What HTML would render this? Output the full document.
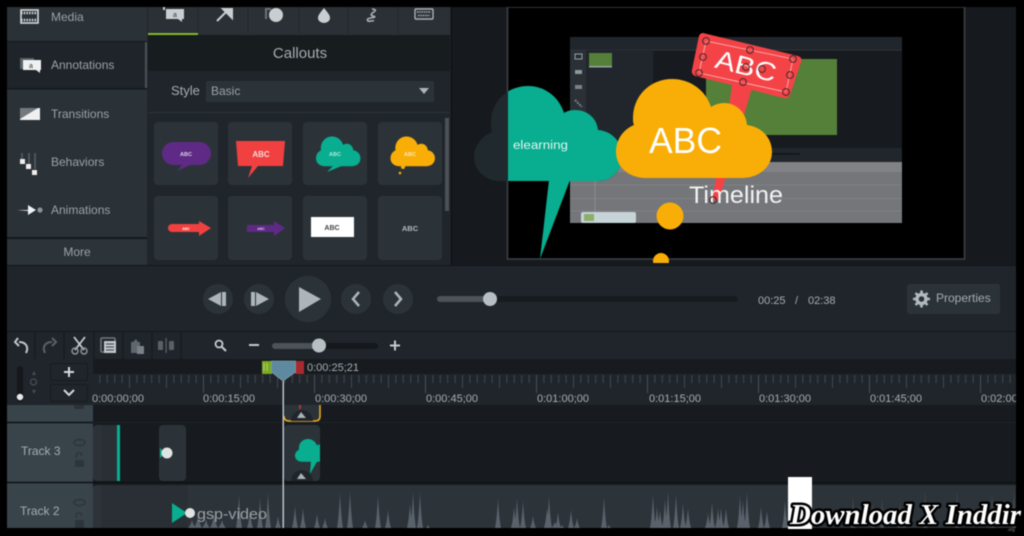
<!DOCTYPE html>
<html lang="en">
<head>
<meta charset="utf-8">
<title>Camtasia callouts</title>
<style>
html,body{margin:0;padding:0;background:#000;width:1024px;height:536px;overflow:hidden}
svg{display:block;filter:blur(.45px)}
text{font-family:"Liberation Sans",sans-serif}
</style>
</head>
<body>
<svg width="1024" height="536" viewBox="0 0 1024 536" xmlns="http://www.w3.org/2000/svg">
<defs>
<pattern id="t1" x="92" y="374" width="7.4" height="20" patternUnits="userSpaceOnUse"><rect x="0" y="1" width="1" height="8" fill="#3f474d"/></pattern>
<pattern id="t2" x="92" y="374" width="37" height="20" patternUnits="userSpaceOnUse"><rect x="0" y="1" width="1" height="13" fill="#3f474d"/></pattern>
<pattern id="t3" x="92" y="374" width="111" height="20" patternUnits="userSpaceOnUse"><rect x="0" y="1" width="1" height="18" fill="#474f55"/></pattern>
<clipPath id="canvasClip"><rect x="508" y="7" width="457" height="252"/></clipPath>
<clipPath id="dotClip"><rect x="640" y="240" width="50" height="23"/></clipPath>
<clipPath id="clipThumb"><rect x="284" y="425" width="36" height="56"/></clipPath>
</defs>

<rect width="1024" height="536" fill="#000"/>

<!-- sidebar -->
<rect x="7" y="7" width="140" height="259" fill="#2a3137"/>
<rect x="7" y="41" width="140" height="1.5" fill="#14181b"/>
<rect x="7" y="42" width="140" height="46" fill="#1e2429"/>
<rect x="145" y="42" width="2" height="46" fill="#4a5258"/>
<rect x="7" y="88" width="140" height="1.5" fill="#14181b"/>
<rect x="7" y="237" width="140" height="2" fill="#14181b"/>
<rect x="7" y="239" width="140" height="26" fill="#2c3339"/>
<g font-size="12" fill="#9aa3a8">
<text x="51" y="21">Media</text>
<text x="51" y="69">Annotations</text>
<text x="51" y="118">Transitions</text>
<text x="51" y="166">Behaviors</text>
<text x="51" y="214">Animations</text>
</g>
<text x="77" y="256" font-size="12" fill="#9aa3a8" text-anchor="middle">More</text>
<!-- media icon -->
<rect x="21" y="10" width="17" height="13" fill="none" stroke="#d5d9db" stroke-width="1.6"/>
<path d="M21 13H38M21 20H38" stroke="#d5d9db" stroke-width="2.4" stroke-dasharray="1.5 1.2"/>
<!-- annotation icon -->
<path d="M20 58h14v3H23v8h-3z" fill="#596167"/>
<path d="M23 60H41V70H40V73L36 70H23Z" fill="#eef0f1"/>
<text x="31" y="68" font-size="7" fill="#333" text-anchor="middle">a</text>
<!-- transitions -->
<path d="M20 108H40V120H20Z" fill="#eef0f1"/><path d="M20 120V119L38 108H20Z" fill="#73797d"/>
<!-- behaviors -->
<path d="M22 153v7M29 153v12M35 153v16" stroke="#4e565b" stroke-width="2"/>
<rect x="20" y="159" width="5" height="5" fill="#eee"/><rect x="26" y="164" width="5" height="5" fill="#eee"/><rect x="32" y="170" width="5" height="5" fill="#eee"/>
<!-- animations -->
<path d="M17 210H28V205L36 210L28 215V211Z" fill="#f0f2f3"/><circle cx="40" cy="210" r="2.6" fill="#8c9397"/>

<!-- panel -->
<rect x="147" y="7" width="305" height="259" fill="#20252b"/>
<rect x="148" y="7" width="302" height="28" fill="#2a3036"/>
<path d="M198 7V34M248 7V34M299 7V34M348 7V34M398 7V34" stroke="#22272c"/>
<rect x="148" y="33" width="50" height="2" fill="#84b82a"/>
<rect x="148" y="35" width="302" height="36" fill="#171c1f"/>
<text x="300" y="58" font-size="15" fill="#a4adb2" text-anchor="middle">Callouts</text>
<text x="171" y="95" font-size="13" fill="#a4adb2">Style</text>
<rect x="206" y="81" width="228" height="21" rx="2" fill="#2c3338"/>
<text x="211" y="95" font-size="12" fill="#9aa3a8">Basic</text>
<path d="M419 88H429L424 94Z" fill="#aeb5b9"/>
<rect x="148" y="112" width="302" height="1" fill="#2b3238"/>
<rect x="445" y="118" width="4" height="93" fill="#4a5258"/>
<!-- tab icons -->
<path d="M163 7h2v3h-2zM166 9H184V19H182V22L178 19H166Z" fill="#c9ced1"/>
<text x="175" y="17" font-size="7" fill="#333" text-anchor="middle">a</text>
<path d="M217 21L228 10M223 9H232V18Z" stroke="#c9ced1" stroke-width="2" fill="#c9ced1"/>
<path d="M265 8h6v2h-4v9h-2z" fill="#6b7277"/><circle cx="276" cy="15" r="7" fill="#c9ced1"/>
<path d="M324 8C320 13 318 15 318 18A6 5 0 0 0 330 18C330 15 328 13 324 8Z" fill="#c9ced1"/>
<path d="M372 9C382 10 366 14 373 16C380 18 364 17 368 21C370 22 372 20 374 21" fill="none" stroke="#aab1b5" stroke-width="1.6"/>
<rect x="415" y="9" width="18" height="10" rx="1" fill="none" stroke="#aab1b5" stroke-width="1.4"/>
<path d="M417 12H431M418 15.500H430" stroke="#aab1b5" stroke-width="1.600" stroke-dasharray="1.500 .8"/>

<!-- tiles -->
<g fill="#2c3338">
<rect x="154" y="122" width="64" height="63" rx="4"/><rect x="228" y="122" width="64" height="63" rx="4"/><rect x="303" y="122" width="64" height="63" rx="4"/><rect x="378" y="122" width="64" height="63" rx="4"/>
<rect x="154" y="196" width="64" height="64" rx="4"/><rect x="228" y="196" width="64" height="64" rx="4"/><rect x="303" y="196" width="64" height="64" rx="4"/><rect x="378" y="196" width="64" height="64" rx="4"/>
</g>
<rect x="162" y="142" width="49" height="23" rx="11.500" fill="#5f2a86"/><path d="M183 164L177 171L192 164Z" fill="#5f2a86"/>
<text x="186" y="156" font-size="5.500" font-weight="bold" fill="#dcd3e3" text-anchor="middle">ABC</text>
<path d="M236 141L285 141L283 166L258 166L248 178L252 166L238 166Z" fill="#f04040"/>
<text x="261" y="157" font-size="8" font-weight="bold" fill="#f6d9d9" text-anchor="middle">ABC</text>
<g transform="translate(316,136.500) scale(.285,.3) translate(-616,-79)"><path d="M646 178H742C760 178 772 166 772 152C772 138 762 127 747 125C746 112 736 103 724 103C719 103 714 105 711 107C706 91 691 79 672 79C650 79 633 96 633 118C633 121 633 123 634 125C624 129 616 139 616 152C616 167 629 178 646 178Z" fill="#08ae8f"/></g>
<path d="M334 165L327 172L344 165Z" fill="#08ae8f"/>
<text x="335" y="156" font-size="5.500" font-weight="bold" fill="#b9e4db" text-anchor="middle">ABC</text>
<g transform="translate(390.500,136.500) scale(.285,.3) translate(-616,-79)"><path d="M646 178H742C760 178 772 166 772 152C772 138 762 127 747 125C746 112 736 103 724 103C719 103 714 105 711 107C706 91 691 79 672 79C650 79 633 96 633 118C633 121 633 123 634 125C624 129 616 139 616 152C616 167 629 178 646 178Z" fill="#f8ae06"/></g>
<circle cx="403" cy="167" r="2" fill="#f8ae06"/><circle cx="400" cy="173" r="1.300" fill="#f8ae06"/>
<text x="410" y="156" font-size="5.500" font-weight="bold" fill="#fbe6b8" text-anchor="middle">ABC</text>
<path d="M172 224H199V221L211 228L199 236V232H172A4 4 0 0 1 172 224Z" fill="#f04040"/>
<text x="186" y="230" font-size="3.500" font-weight="bold" fill="#fff" text-anchor="middle">ABC</text>
<path d="M247 225H274V221L285 228L274 236V232H247Z" fill="#5f2a86"/>
<text x="261" y="230" font-size="3.500" font-weight="bold" fill="#d7c6e3" text-anchor="middle">ABC</text>
<rect x="311" y="217" width="43" height="20" fill="#fff"/>
<text x="332" y="230" font-size="7" font-weight="bold" fill="#444" text-anchor="middle">ABC</text>
<text x="410" y="231" font-size="7.500" font-weight="bold" fill="#b5bbbf" text-anchor="middle">ABC</text>

<!-- canvas area -->
<rect x="452" y="7" width="564" height="258" fill="#161a1e"/>
<rect x="451" y="7" width="1" height="258" fill="#0b0d0f"/>
<rect x="507.500" y="7" width="457" height="252" fill="#000" stroke="#3d4247" stroke-width="1.500"/>
<g clip-path="url(#canvasClip)">
<!-- inner screenshot -->
<rect x="570" y="37" width="332" height="186" fill="#171b1f"/>
<rect x="570" y="37" width="332" height="13" fill="#20262c"/>
<rect x="570" y="49.500" width="332" height="1" fill="#2e353b"/>
<rect x="570" y="50" width="16" height="98" fill="#2a3036"/>
<rect x="586" y="50" width="67" height="98" fill="#20262c"/>
<rect x="589" y="53" width="23" height="13" fill="#54803a"/>
<rect x="589" y="66" width="23" height="1.500" fill="#9ba3a6"/>
<rect x="575" y="54" width="7" height="5" fill="none" stroke="#9aa1a4"/>
<rect x="575" y="70" width="7" height="4" fill="#8f979b"/>
<rect x="575" y="85" width="7" height="4" fill="#7a8286"/>
<path d="M575 100L582 107" stroke="#7a8286" stroke-width="2" stroke-dasharray="2 1"/>
<rect x="706" y="59" width="131" height="76" fill="#54803a"/>
<rect x="570" y="148" width="332" height="14" fill="#20262c"/>
<rect x="760" y="153" width="40" height="2" fill="#14181b"/>
<rect x="570" y="162" width="332" height="61" fill="#747679"/>
<rect x="570" y="162" width="332" height="10" fill="#808285"/>
<path d="M570 185H902M570 198.500H902M570 211H902" stroke="#7f8184"/>
<path d="M595 172V223" stroke="#8a8d8f"/>
<rect x="581" y="212" width="55" height="11" rx="2" fill="#c6d3d7"/>
<rect x="584" y="214" width="10" height="7" fill="#8cae6c"/>
</g>
<!-- teal cloud ghost + cloud -->
<path d="M500 181H598C612 181 622 170 622 156C622 142 612 131 598 130C597 118 587 110 575 110C571 110 567 111 564 113C559 97 545 86 528 86C507 86 491 102 491 122C491 126 491 130 492 132C482 136 474 146 474 157C474 170 485 181 500 181Z" fill="#20292e"/>
<g clip-path="url(#canvasClip)">
<path d="M500 181H598C612 181 622 170 622 156C622 142 612 131 598 130C597 118 587 110 575 110C571 110 567 111 564 113C559 97 545 86 528 86C507 86 491 102 491 122C491 126 491 130 492 132C482 136 474 146 474 157C474 170 485 181 500 181Z" fill="#08ae8f"/>
<path d="M549 180L570 180L540 259Z" fill="#08ae8f"/>
</g>
<text x="513" y="149" font-size="11.500" fill="#e4f5f1" textLength="55" lengthAdjust="spacingAndGlyphs">elearning</text>
<!-- red sign -->
<path d="M732 85L752 88L719 200L716 200Z" fill="#f44347"/>
<path d="M703 33L798 56Q803 58 801 62L790 95Q788 99 784 98L695 76Q691 74 692 70L699 36Q700 33 703 33Z" fill="#f44347"/>
<path d="M706 41L793 59L786 92L699 73Z" fill="none" stroke="#f9c0c0" stroke-width=".8"/>
<text x="746" y="75" font-size="26" fill="#fff" text-anchor="middle" transform="rotate(14 746 66)" textLength="62" lengthAdjust="spacingAndGlyphs">ABC</text>
<g fill="#e8484b" fill-opacity=".6" stroke="#3a2326" stroke-width=".9">
<circle cx="706" cy="41" r="3.400"/><circle cx="750" cy="50" r="3.400"/><circle cx="793" cy="59" r="3.400"/><circle cx="703" cy="57" r="3.400"/><circle cx="790" cy="75" r="3.400"/><circle cx="699" cy="73" r="3.400"/><circle cx="743" cy="82" r="3.400"/><circle cx="786" cy="92" r="3.400"/><circle cx="746" cy="67" r="3.400"/><circle cx="762" cy="69" r="3.400"/>
</g>
<!-- amber cloud -->
<path d="M646 178H742C760 178 772 166 772 152C772 138 762 127 747 125C746 112 736 103 724 103C719 103 714 105 711 107C706 91 691 79 672 79C650 79 633 96 633 118C633 121 633 123 634 125C624 129 616 139 616 152C616 167 629 178 646 178Z" fill="#f8ae06"/>
<text x="649" y="153" font-size="36" fill="#fff" textLength="73" lengthAdjust="spacingAndGlyphs">ABC</text>
<path d="M716 178H721L716 200H712Z" fill="#f44347"/>
<text x="689" y="203" font-size="24" fill="#f2f3f3" textLength="94" lengthAdjust="spacingAndGlyphs">Timeline</text>
<circle cx="713" cy="200" r="3.400" fill="none" stroke="#3a2326"/>
<ellipse cx="670" cy="216" rx="13.500" ry="13.500" fill="#f8ae06"/>
<g clip-path="url(#dotClip)"><circle cx="661" cy="261" r="8" fill="#f8ae06"/></g>

<!-- player -->
<rect x="7" y="265" width="1009" height="1.500" fill="#12161a"/>
<rect x="7" y="266" width="1009" height="65" fill="#20252b"/>
<g fill="#2c3338">
<circle cx="218" cy="299" r="15"/><circle cx="259" cy="299" r="15"/><circle cx="308" cy="299" r="23"/><circle cx="356" cy="299" r="15"/><circle cx="398" cy="299" r="15"/>
</g>
<path d="M208 299L221 292V306ZM222 292H226V306H222Z" fill="#aeb5b9"/>
<path d="M251 292H255V306H251ZM256 292L269 299L256 306Z" fill="#aeb5b9"/>
<path d="M299 287L321 299L299 312Z" fill="#aeb5b9"/>
<path d="M359 292L353 299L359 306" fill="none" stroke="#aeb5b9" stroke-width="2.500"/>
<path d="M395 292L401 299L395 306" fill="none" stroke="#aeb5b9" stroke-width="2.500"/>
<rect x="437" y="296" width="301" height="6" rx="3" fill="#171b1f"/>
<rect x="437" y="296" width="53" height="6" rx="3" fill="#4b5258"/>
<circle cx="490" cy="299" r="7" fill="#b8bfc3"/>
<text x="758" y="304" font-size="11" fill="#a4adb2">00:25</text>
<text x="795" y="304" font-size="11" fill="#a4adb2">/</text>
<text x="808" y="304" font-size="11" fill="#a4adb2">02:38</text>
<rect x="907" y="284" width="93" height="30" rx="3" fill="#2c3338"/>
<path d="M921.500 290.500V307.500M913 299H930M915.500 293L927.500 305M927.500 293L915.500 305" stroke="#b3babd" stroke-width="2.600"/>
<circle cx="921.500" cy="299" r="6.200" fill="#b3babd"/>
<circle cx="921.500" cy="299" r="2.800" fill="#2c3338"/>
<text x="936" y="302" font-size="12" fill="#a4adb2">Properties</text>

<!-- toolbar -->
<rect x="7" y="331" width="1009" height="1" fill="#14181b"/>
<rect x="7" y="332" width="1009" height="27" fill="#20252b"/>
<path d="M35 332V359M64 332V359M94 332V359M123 332V359M152 332V359M181 332V359" stroke="#14181b"/>
<path d="M26 353C29 347 26 342 19 342M18 338L15 342L19 346" fill="none" stroke="#c0c6c9" stroke-width="2"/>
<path d="M45 353C42 347 45 342 52 342M52 338L56 342L52 346" fill="none" stroke="#596167" stroke-width="2"/>
<path d="M74 337L84 350M85 337L75 350" stroke="#c5cacd" stroke-width="1.800"/><circle cx="75" cy="351" r="3" fill="none" stroke="#8f979b" stroke-width="1.400"/><circle cx="84" cy="351" r="3" fill="none" stroke="#8f979b" stroke-width="1.400"/>
<rect x="101" y="338" width="14" height="14" rx="1" fill="none" stroke="#71797e" stroke-width="1.500"/>
<rect x="104" y="341" width="12" height="12" fill="#c0c6c9"/><path d="M106 344H114M106 347H114M106 350H114" stroke="#3b4247"/>
<path d="M131 342H140V353H131Z" fill="#5f676c"/><path d="M133 342L136 339L138 342Z" fill="#5f676c"/><rect x="137" y="346" width="7" height="8" fill="#7a8287"/>
<rect x="158" y="341" width="5" height="9" rx="1" fill="#596167"/><rect x="169" y="341" width="5" height="9" rx="1" fill="#596167"/><rect x="165.500" y="338" width="1.200" height="15" fill="#596167"/>
<circle cx="219" cy="344" r="3.500" fill="none" stroke="#c5cacd" stroke-width="1.800"/><path d="M222 347L226 351" stroke="#c5cacd" stroke-width="2"/>
<rect x="249" y="344" width="10" height="2" fill="#c5cacd"/>
<rect x="272" y="343" width="106" height="6" rx="3" fill="#14181b"/>
<rect x="272" y="343" width="47" height="6" rx="3" fill="#4b5258"/>
<circle cx="319" cy="345.500" r="7" fill="#b8bfc3"/>
<path d="M390 345.500H400M395 340.500V350.500" stroke="#c5cacd" stroke-width="2"/>

<!-- timeline head -->
<rect x="7" y="359" width="1009" height="46" fill="#20252b"/>
<rect x="93" y="359" width="923" height="15" fill="#171b1f"/>
<rect x="93" y="374" width="923" height="20" fill="url(#t1)"/>
<rect x="93" y="374" width="923" height="20" fill="url(#t2)"/>
<rect x="93" y="374" width="923" height="20" fill="url(#t3)"/>
<rect x="17" y="366" width="6" height="36" rx="3" fill="#14181b"/>
<circle cx="20" cy="397" r="3.200" fill="#e6e8e9"/>
<path d="M34 371L32 375H36ZM34 394L32 390H36Z" fill="#454d52"/>
<circle cx="33.500" cy="382" r="3" fill="none" stroke="#454d52" stroke-width="1.300"/>
<rect x="50.500" y="363.500" width="37" height="17" rx="2" fill="#20252b" stroke="#171b1f"/>
<rect x="50.500" y="384.500" width="37" height="17" rx="2" fill="#20252b" stroke="#171b1f"/>
<path d="M64 372H74M69 367V377" stroke="#d5d9db" stroke-width="2"/>
<path d="M64 390L69 395L74 390" fill="none" stroke="#d5d9db" stroke-width="2"/>
<g font-size="11" fill="#a4adb2">
<text x="92" y="402">0:00:00;00</text><text x="203" y="402">0:00:15;00</text><text x="315" y="402">0:00:30;00</text><text x="426" y="402">0:00:45;00</text><text x="537" y="402">0:01:00;00</text><text x="649" y="402">0:01:15;00</text><text x="759" y="402">0:01:30;00</text><text x="870" y="402">0:01:45;00</text><text x="981" y="402">0:02:00</text>
</g>

<!-- tracks -->
<rect x="7" y="405" width="1009" height="123" fill="#171b1f"/>
<rect x="7" y="405" width="86" height="123" fill="#38434a"/>
<path d="M7 422.500H1016M7 482.500H1016" stroke="#0f1215" stroke-width="1.500"/>
<path d="M93 422.500H1016" stroke="#20262b"/>
<path d="M74 405h10v2q0 2-2 2h-6q-2 0-2-2z" fill="#2b3339"/>
<g font-size="12" fill="#a4adb0">
<text x="21" y="455">Track 3</text><text x="20" y="515">Track 2</text>
</g>
<g fill="none" stroke="#2c353a" stroke-width="1.500">
<ellipse cx="79.500" cy="442.500" rx="5.500" ry="3"/>
<ellipse cx="79.500" cy="502.500" rx="5.500" ry="3"/>
<path d="M76 458V456A3 3 0 0 1 82 456"/>
<path d="M76 518V516A3 3 0 0 1 82 516"/>
</g>
<rect x="75" y="460" width="9" height="7" rx="1" fill="#2c353a"/>
<rect x="75" y="520" width="9" height="8" rx="1" fill="#2c353a"/>

<!-- clips -->
<path d="M284 405H320V416Q320 421 315 421H289Q284 421 284 416Z" fill="#2c3338"/>
<path d="M284 416Q284 421 289 421H315Q320 421 320 416V405" fill="none" stroke="#f0ae22" stroke-width="1.500"/>
<rect x="299" y="405" width="2" height="4" fill="#b23333"/>
<path d="M291 421A10 10 0 0 1 313 421Z" fill="#20252b"/><path d="M301 412L297 418H306Z" fill="#aab1b4"/>
<rect x="93" y="425" width="27" height="56" rx="4" fill="#2c3338"/>
<rect x="101" y="425" width="16" height="56" fill="#292f35"/>
<rect x="117" y="425" width="3" height="56" fill="#08ae8f"/>
<rect x="159" y="425" width="27" height="56" rx="4" fill="#2c3338"/>
<path d="M160 448L165 453L160 458Z" fill="#08ae8f"/>
<circle cx="167" cy="453" r="5.500" fill="#e0e2e3"/>
<rect x="284" y="425" width="36" height="56" rx="4" fill="#2c3338"/>
<g clip-path="url(#clipThumb)">
<g transform="translate(295,439) scale(.23,.23) translate(-616,-79)"><path d="M646 178H742C760 178 772 166 772 152C772 138 762 127 747 125C746 112 736 103 724 103C719 103 714 105 711 107C706 91 691 79 672 79C650 79 633 96 633 118C633 121 633 123 634 125C624 129 616 139 616 152C616 167 629 178 646 178Z" fill="#08ae8f"/></g>
<path d="M311 460L318 460L310 474Z" fill="#08ae8f"/>
</g>
<path d="M291 481A10 10 0 0 1 313 481Z" fill="#20252b"/><path d="M301 473L297 479H306Z" fill="#aab1b4"/>

<!-- audio clip -->
<path d="M93 528V489Q93 485 97 485H1016V528Z" fill="#2c3339"/>
<rect x="101" y="485" width="87" height="43" fill="#292f35"/>
<path fill="#59626a" d="M188 528q3-3 4-8q1 5 4 8zM194 528q3-5 4-12q1 7 4 12zM202 528q3-3 4-9q1 6 4 9zM210 528q3-5 4-14q1 9 4 14zM218 528q3-3 4-8q1 5 4 8zM236 528q2-12 3-33q1 21 3 33zM247 528q2-6 3-18q1 12 3 18zM257 528q2-10 3-30q1 20 3 30zM265 528q2-12 3-35q1 23 3 35zM275 528q2-4 3-12q1 8 3 12zM292 528q2-8 3-22q1 14 3 22zM300 528q2-7 3-20q1 13 3 20zM314 528q2-5 3-14q1 9 3 14zM322 528q2-3 3-10q1 7 3 10zM337 528q2-12 3-35q1 23 3 35zM347 528q2-13 3-37q1 24 3 37zM362 528q2-3 3-8q1 5 3 8zM375 528q2-11 3-33q1 22 3 33zM385 528q2-6 3-18q1 12 3 18zM407 528q2-8 3-25q1 17 3 25zM410 528q2-12 3-36q1 24 3 36zM417 528q2-12 3-36q1 24 3 36zM426 528q1-1 2-3q1 2 2 3zM495 528q2-10 3-30q1 20 3 30zM511 528q2-7 3-22q1 15 3 22zM514 528q2-10 3-30q1 20 3 30zM520 528q2-9 3-27q1 18 3 27zM530 528q2-4 3-12q1 8 3 12zM544 528q2-7 3-20q1 13 3 20zM546 528q2-11 3-32q1 21 3 32zM552 528q1-2 3-6q1 4 3 6zM555 528q2-5 3-16q1 11 3 16zM560 528q1-1 2-3q1 2 2 3zM568 528q2-6 3-18q1 12 3 18zM574 528q2-3 3-10q1 7 3 10zM601 528q2-10 3-31q1 21 3 31zM607 528q1-1 2-3q1 2 2 3zM650 528q2-11 3-34q1 23 3 34zM654 528q2-7 3-22q1 15 3 22zM657 528q2-6 3-18q1 12 3 18zM662 528q2-10 3-29q1 19 3 29zM665 528q2-12 3-37q1 25 3 37zM673 528q2-11 3-34q1 23 3 34zM680 528q2-8 3-25q1 17 3 25zM685 528q2-7 3-20q1 13 3 20zM705 528q2-5 3-15q1 10 3 15zM709 528q2-9 3-26q1 17 3 26zM715 528q2-7 3-20q1 13 3 20zM718 528q2-7 3-20q1 13 3 20zM723 528q2-7 3-20q1 13 3 20zM737 528q2-11 3-33q1 22 3 33zM740 528q2-9 3-28q1 19 3 28zM744 528q2-12 3-36q1 24 3 36zM758 528q2-7 3-22q1 15 3 22zM764 528q2-6 3-17q1 11 3 17zM782 528q2-9 3-27q1 18 3 27z"/>
<path fill="#464f55" d="M851 528q1-10 2-33q1 23 2 33zM871 528q1-8 2-26q1 18 2 26zM880 528q1-9 2-30q1 21 2 30zM898 528q1-8 2-26q1 18 2 26zM902 528q1-7 2-22q1 15 2 22zM923 528q1-11 2-37q1 26 2 37zM955 528q1-11 2-37q1 26 2 37zM990 528q1-10 2-35q1 25 2 35zM1012 528q1-11 2-37q1 26 2 37z"/>
<text x="197" y="519" font-size="15" fill="#9aa2a6" textLength="70" lengthAdjust="spacingAndGlyphs">gsp-video</text>
<path d="M172 503L187 513L172 523Z" fill="#08ae8f"/>
<circle cx="190" cy="513" r="5" fill="#e0e2e3"/>

<!-- playhead -->
<rect x="282.500" y="375" width="1.500" height="153" fill="#b9c3c8"/>
<rect x="262" y="361" width="10" height="13" fill="#78aa20"/>
<path d="M264 363V371M267 363V371" stroke="#c1d68a" stroke-width=".8"/>
<rect x="295" y="361" width="9" height="13" fill="#a82a2e"/>
<path d="M271.500 361H295.500V372L283 381L271.500 372Z" fill="#5d8aa0" stroke="#7f9aa6" stroke-width=".8"/>
<text x="307" y="371" font-size="11" fill="#a4adb2">0:00:25;21</text>

<!-- frame -->
<rect x="0" y="528" width="1024" height="8" fill="#000"/>
<rect x="1016" y="0" width="8" height="536" fill="#000"/>
<rect x="0" y="0" width="7" height="536" fill="#000"/>
<rect x="0" y="0" width="1024" height="7" fill="#000"/>

<!-- watermark -->
<rect x="788" y="477" width="24" height="52" fill="#fff"/>
<text x="790" y="524" font-size="29" font-weight="bold" font-style="italic" fill="#000" stroke="#000" stroke-width="5" stroke-linejoin="round" style="font-family:'Liberation Serif',serif" textLength="231" lengthAdjust="spacingAndGlyphs">Download X Inddir</text>
<text x="790" y="524" font-size="29" font-weight="bold" font-style="italic" fill="#fff" style="font-family:'Liberation Serif',serif" textLength="231" lengthAdjust="spacingAndGlyphs">Download X Inddir</text>
<text x="1007" y="531" font-size="4.500" fill="#8a8f92">.org</text>
</svg>
</body>
</html>
